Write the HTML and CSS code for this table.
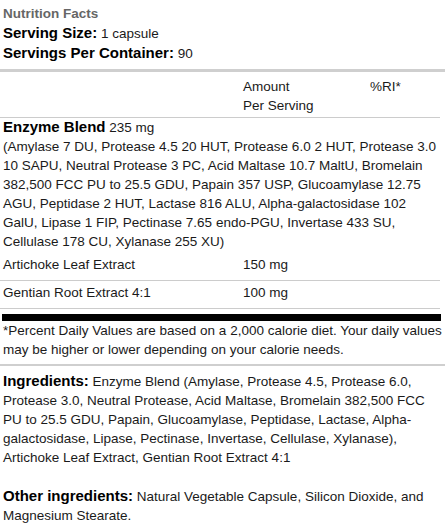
FILE: index.html
```html
<!DOCTYPE html>
<html>
<head>
<meta charset="utf-8">
<link rel="stylesheet" href="styles.css">
</head>
<body>
<div class="label">
  <div class="head">
    <div class="title">Nutrition Facts</div>
    <div><b>Serving Size:</b> 1 capsule</div>
    <div><b>Servings Per Container:</b> 90</div>
  </div>
  <div class="sep"></div>
  <table class="facts">
    <tr class="colhead">
      <td class="c-name"></td>
      <td class="c-amt">Amount<br>Per Serving</td>
      <td class="c-ri">%RI*</td>
    </tr>
    <tr class="blend">
      <td colspan="3"><b>Enzyme Blend</b> 235 mg<br>(Amylase 7 DU, Protease 4.5 20 HUT, Protease 6.0 2 HUT, Protease 3.0 10 SAPU, Neutral Protease 3 PC, Acid Maltase 10.7 MaltU, Bromelain 382,500 FCC PU to 25.5 GDU, Papain 357 USP, Glucoamylase 12.75 AGU, Peptidase 2 HUT, Lactase 816 ALU, Alpha-galactosidase 102 GalU, Lipase 1 FIP, Pectinase 7.65 endo-PGU, Invertase 433 SU, Cellulase 178 CU, Xylanase 255 XU)</td>
    </tr>
    <tr class="item">
      <td class="c-name">Artichoke Leaf Extract</td>
      <td class="c-amt">150 mg</td>
      <td class="c-ri"></td>
    </tr>
    <tr class="item">
      <td class="c-name">Gentian Root Extract 4:1</td>
      <td class="c-amt">100 mg</td>
      <td class="c-ri"></td>
    </tr>
  </table>
  <div class="bar"></div>
  <p class="foot">*Percent Daily Values are based on a 2,000 calorie diet. Your daily values may be higher or lower depending on your calorie needs.</p>
  <div class="sep sep2"></div>
  <p class="ingr"><b>Ingredients:</b> Enzyme Blend (Amylase, Protease 4.5, Protease 6.0, Protease 3.0, Neutral Protease, Acid Maltase, Bromelain 382,500 FCC PU to 25.5 GDU, Papain, Glucoamylase, Peptidase, Lactase, Alpha-galactosidase, Lipase, Pectinase, Invertase, Cellulase, Xylanase), Artichoke Leaf Extract, Gentian Root Extract 4:1</p>
  <p class="ingr other"><b>Other ingredients:</b> Natural Vegetable Capsule, Silicon Dioxide, and Magnesium Stearate.</p>
</div>
</body>
</html>
```
FILE: styles.css
```css
html, body {
  margin: 0;
  padding: 0;
  background: #fff;
}
body {
  font-family: "Liberation Sans", Arial, sans-serif;
  font-size: 13.5px;
  line-height: 19px;
  color: #1a1a1a;
}
b {
  font-weight: bold;
  font-size: 15px;
  line-height: 1;
  color: #000;
}
.head {
  padding: 4px 3px 0;
  line-height: 20px;
}
.title {
  font-weight: bold;
  color: #666;
}
.sep {
  height: 3px;
  background: #cfcfcf;
  margin-top: 5px;
}
.facts {
  width: 440px;
  border-collapse: collapse;
}
.facts td {
  padding: 0 3px;
  vertical-align: top;
}
.colhead td {
  padding-top: 5px;
  padding-bottom: 2px;
  border-bottom: 1px solid #ccc;
}
.c-name { width: 234px; }
.c-amt { width: 121px; }
.blend td {
  padding-top: 0;
  padding-bottom: 2px;
}
.item td {
  padding-top: 2px;
  padding-bottom: 6px;
  border-bottom: 1px solid #ccc;
}
.bar {
  width: 439px;
  margin-left: 2px;
  height: 7px;
  background: #000;
  margin-top: 5px;
}
.foot {
  margin: 0;
  padding: 0 3px 5px;
}
.sep2 {
  margin-top: 0;
  height: 2px;
}
.ingr {
  margin: 0;
  padding: 6px 3px 0;
}
.other {
  padding-top: 20px;
}
```
